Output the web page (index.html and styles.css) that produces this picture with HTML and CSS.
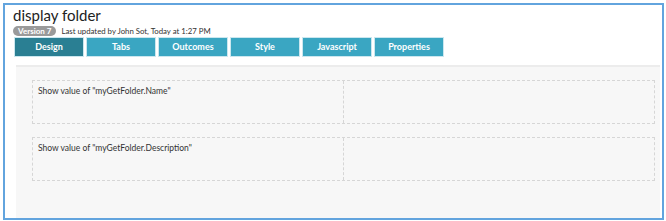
FILE: index.html
```html
<!DOCTYPE html>
<html lang="en">
<head>
<meta charset="UTF-8" />
<title>display folder</title>
<link rel="stylesheet" href="styles.css">
</head>
<body>

<div class="frame">
  <div class="header">
    <h1 class="title">display folder</h1>
    <div class="meta">
      <span class="badge">Version 7</span>
      <span class="updated">Last updated by John Sot, Today at 1:27 PM</span>
    </div>
    <div class="tabs">
      <div class="tab active">Design</div>
      <div class="tab">Tabs</div>
      <div class="tab">Outcomes</div>
      <div class="tab">Style</div>
      <div class="tab">Javascript</div>
      <div class="tab">Properties</div>
    </div>
  </div>

  <div class="canvas">
    <div class="row">
      <div class="cell">Show value of "myGetFolder.Name"</div>
      <div class="cell"></div>
    </div>
    <div class="row">
      <div class="cell">Show value of "myGetFolder.Description"</div>
      <div class="cell"></div>
    </div>
  </div>
</div>

</body>
</html>
```

FILE: styles.css
```css
body {
  margin: 0;
  background: #fff;
  font-family: Lato, 'Open Sans', sans-serif;
  color: #333;
}

.frame {
  margin: 3px 0 0 3px;
  width: 657px;
  height: 213px;
  border: 2px solid #62a4de;
  display: flex;
  flex-direction: column;
  overflow: hidden;
}

.header {
  padding: 0 0 0 8px;
}

.title {
  margin: 0;
  font-size: 15px;
  font-weight: normal;
  line-height: 21px;
  color: #222;
}

.meta {
  display: flex;
  align-items: center;
  gap: 5px;
  height: 11px;
  margin-top: -1px;
}

.badge {
  background: #9a9a9a;
  color: #fff;
  font-size: 8px;
  font-weight: bold;
  line-height: 10px;
  padding: 0 5px;
  border-radius: 6px;
}

.updated {
  font-size: 7.8px;
  color: #333;
}

.tabs {
  display: flex;
  gap: 2px;
  margin-top: 1px;
  padding-left: 1px;
}

.tab {
  width: 68px;
  height: 18px;
  line-height: 18px;
  text-align: center;
  background: #3aa6c2;
  border: 1px solid #cbe7ef;
  color: #fff;
  font-size: 9px;
  font-weight: bold;
}

.tab.active {
  background: #2a7f93;
}

.canvas {
  flex: 1;
  margin: 8px 2px 0 11px;
  background: #f7f7f7;
  border-top: 2px solid #ececec;
  padding: 13px 5px 0 16px;
  display: flex;
  flex-direction: column;
  gap: 13px;
}

.row {
  display: flex;
  height: 42px;
  border: 1px dashed #d6d6d6;
}

.cell {
  flex: 1;
  padding: 5px 5px;
  font-size: 8.5px;
  color: #333;
}

.cell + .cell {
  border-left: 1px dashed #d6d6d6;
}
```
